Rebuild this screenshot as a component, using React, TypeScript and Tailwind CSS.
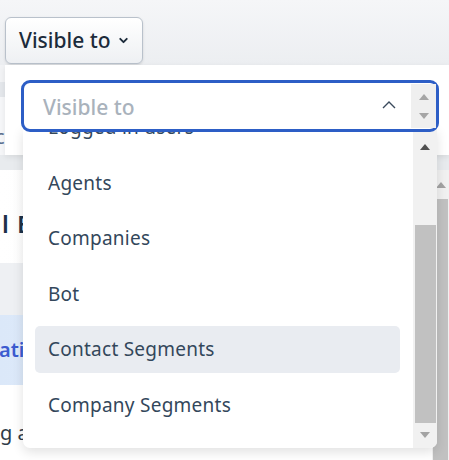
import { ChevronDown } from "lucide-react";

const options = [
  "Logged in users",
  "Agents",
  "Companies",
  "Bot",
  "Contact Segments",
  "Company Segments",
];

function Tri({ up, color }: { up?: boolean; color: string }) {
  return (
    <svg width="12" height="7" viewBox="0 0 12 7">
      <path d={up ? "M1 7 L6 1 L11 7 Z" : "M1 0 L6 6 L11 0 Z"} fill={color} />
    </svg>
  );
}

export default function App() {
  return (
    <div className="relative w-[449px] h-[460px] overflow-hidden bg-[#f3f4f6] font-['Noto_Sans',sans-serif]">
      {/* page behind */}
      <div className="h-[65px] pt-[17px] pl-[5px] bg-gradient-to-b from-[#f5f6f8] to-[#eceef1]">
        <button className="h-[47px] w-[138px] flex items-center gap-[6px] pl-[13px] rounded-[6px] border border-[#b9c1cb] bg-gradient-to-b from-white to-[#eef0f3] shadow-sm text-[21px] font-medium text-[#1c2b3b]">
          Visible to
          <ChevronDown className="w-[13px] h-[13px]" strokeWidth={3.5} />
        </button>
      </div>
      <div className="h-[17px] bg-[#f2f3f5]" />
      <div className="h-[15px] bg-[#e4e7eb]" />
      <div className="h-[58px] bg-[#f6f7f9] flex items-end pb-[8px]">
        <span className="ml-[-5px] text-[20px] text-[#5b6f8e] leading-none">c</span>
      </div>
      <div className="h-[15px] bg-[#e8ebee]" />
      <div className="flex h-[290px]">
        <div className="flex-1 flex flex-col">
          <div className="h-[93px] bg-gradient-to-r from-white to-[#f1f2f4] flex items-center pl-[2px] pt-[14px]">
            <span className="text-[24px] font-semibold text-[#1d3149] tracking-[1px]">l Email templates</span>
          </div>
          <div className="h-[52px] bg-[#eef0f3]" />
          <div className="h-[70px] bg-gradient-to-r from-[#dbe8f9] to-[#eef5fd] flex items-center">
            <span className="ml-[-1px] text-[20px] font-semibold text-[#3b5bd0]">ations</span>
          </div>
          <div className="h-[75px] bg-white flex items-center pt-[20px]">
            <span className="text-[20px] text-[#2f3b48]">g all</span>
          </div>
        </div>
        <div className="w-[17px] bg-[#f1f1f1] flex flex-col items-center">
          <div className="h-[29px] flex items-center justify-center">
            <svg width="10" height="6" viewBox="0 0 10 6">
              <path d="M0 6 L5 0 L10 6 Z" fill="#a3a3a3" />
            </svg>
          </div>
          <div className="w-[15px] flex-1 bg-[#c1c1c1]" />
        </div>
      </div>

      {/* popover */}
      <div className="absolute left-[5px] top-[65px] w-[444px] h-[90px] bg-white shadow-[0_2px_6px_rgba(0,0,0,0.08)] pt-[15px] pl-[16px]">
        <div className="relative z-20 w-[418px] h-[52px] rounded-[9px] border-[3px] border-[#2d5ec6] bg-white flex items-center pl-[19px]">
          <span className="flex-1 pt-[4px] text-[21px] font-medium text-[#a9b2bc]">Visible to</span>
          <svg width="14" height="8" viewBox="0 0 14 8" className="mr-[15px] mt-[-2px]">
            <path d="M1 7 L7 1 L13 7" fill="none" stroke="#3a4a5c" strokeWidth="1.4" />
          </svg>
          <div className="w-[25px] h-[44px] bg-[#efefef] flex flex-col items-center justify-between pt-[9px] pb-[8px]">
            <Tri up color="#a5a5a5" />
            <Tri color="#a5a5a5" />
          </div>
        </div>

        {/* option list */}
        <div className="absolute z-10 left-[18px] top-[63px] w-[414px] h-[320px] bg-white rounded-b-[7px] shadow-[0_4px_12px_rgba(0,0,0,0.12)] overflow-hidden flex">
          <div className="flex-1 pl-[12px] pr-[13px]">
            <div className="mt-[-24px] flex flex-col gap-[8.5px]">
              {options.map((o) => (
                <div
                  key={o}
                  className={`h-[47px] rounded-[5px] flex items-center pl-[13px] text-[19px] tracking-[0.25px] text-[#33475b] ${
                    o === "Contact Segments" ? "bg-[#e9ecf1]" : ""
                  }`}
                >
                  {o}
                </div>
              ))}
            </div>
          </div>
          <div className="w-[24px] bg-[#f1f1f1] flex flex-col items-center">
            <div className="h-[36px] flex items-center justify-center">
              <Tri up color="#505050" />
            </div>
            <div className="h-[61px]" />
            <div className="w-[21px] h-[198px] bg-[#c1c1c1]" />
            <div className="flex-1 flex items-center justify-center">
              <Tri color="#a3a3a3" />
            </div>
          </div>
        </div>
      </div>
    </div>
  );
}
